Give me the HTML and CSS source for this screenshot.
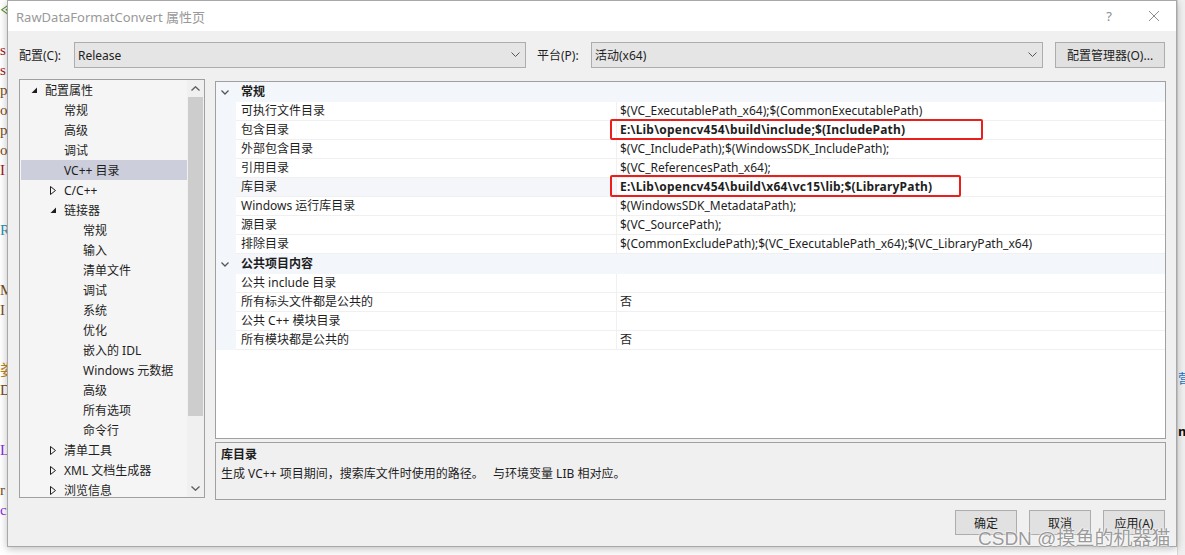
FILE: index.html
```html
<!DOCTYPE html>
<html lang="zh-CN">
<head>
<meta charset="utf-8">
<title>RawDataFormatConvert 属性页</title>
<link rel="stylesheet" href="styles.css">
</head>
<body>
<div class="screen">
  <div class="editor-strip">
    <pre class="code"><span class="c-g">≪</span>
<span class="c-r"> </span>
<span class="c-r">s</span>
<span class="c-r">s</span>
<span class="c-b">p</span>
<span class="c-b">o</span>
<span class="c-b">p</span>
<span class="c-b">o</span>
<span class="c-r">I</span>
<span> </span>
<span> </span>
<span class="c-t">R</span>
<span> </span>
<span> </span>
<span class="c-b">M</span>
<span class="c-b">I</span>
<span> </span>
<span> </span>
<span class="c-o">娄</span>
<span class="c-b">D</span>
<span> </span>
<span> </span>
<span class="c-p">L</span>
<span> </span>
<span class="c-b">r</span>
<span class="c-p">c</span></pre>
  </div>

  <div class="dialog">
    <div class="titlebar">
      <span class="title">RawDataFormatConvert 属性页</span>
      <span class="tb-help">?</span>
      <svg class="tb-close" width="12" height="12" viewBox="0 0 12 12"><path d="M1 1 L11 11 M11 1 L1 11" stroke="#8c8c8c" stroke-width="1" fill="none"/></svg>
    </div>

    <div class="body">
      <div class="config-row">
        <span class="lbl lbl1">配置(C):</span>
        <div class="combo">
          <span>Release</span>
          <svg class="chev" width="9" height="5" viewBox="0 0 9 5"><path d="M0.5 0.5 L4.5 4.5 L8.5 0.5" stroke="#555" stroke-width="1" fill="none"/></svg>
        </div>
        <span class="lbl lbl2">平台(P):</span>
        <div class="combo">
          <span>活动(x64)</span>
          <svg class="chev" width="9" height="5" viewBox="0 0 9 5"><path d="M0.5 0.5 L4.5 4.5 L8.5 0.5" stroke="#555" stroke-width="1" fill="none"/></svg>
        </div>
        <div class="btn cfgmgr">配置管理器(O)...</div>
      </div>

      <div class="main">
        <div class="tree">
          <div class="list">
            <div class="node l0"><span class="tw"><svg width="7" height="7" viewBox="0 0 7 7"><path d="M6 0.5 L6 6 L0.5 6 Z" fill="#1e1e1e"/></svg></span><span>配置属性</span></div>
            <div class="node l1"><span class="tw"></span><span>常规</span></div>
            <div class="node l1"><span class="tw"></span><span>高级</span></div>
            <div class="node l1"><span class="tw"></span><span>调试</span></div>
            <div class="node l1 sel"><span class="tw"></span><span>VC++ 目录</span></div>
            <div class="node l0b"><span class="tw"><svg width="6" height="9" viewBox="0 0 6 9"><path d="M0.5 0.5 L5.5 4.5 L0.5 8.5 Z" stroke="#1e1e1e" stroke-width="1" fill="none"/></svg></span><span>C/C++</span></div>
            <div class="node l0b"><span class="tw"><svg width="7" height="7" viewBox="0 0 7 7"><path d="M6 0.5 L6 6 L0.5 6 Z" fill="#1e1e1e"/></svg></span><span>链接器</span></div>
            <div class="node l2"><span class="tw"></span><span>常规</span></div>
            <div class="node l2"><span class="tw"></span><span>输入</span></div>
            <div class="node l2"><span class="tw"></span><span>清单文件</span></div>
            <div class="node l2"><span class="tw"></span><span>调试</span></div>
            <div class="node l2"><span class="tw"></span><span>系统</span></div>
            <div class="node l2"><span class="tw"></span><span>优化</span></div>
            <div class="node l2"><span class="tw"></span><span>嵌入的 IDL</span></div>
            <div class="node l2"><span class="tw"></span><span>Windows 元数据</span></div>
            <div class="node l2"><span class="tw"></span><span>高级</span></div>
            <div class="node l2"><span class="tw"></span><span>所有选项</span></div>
            <div class="node l2"><span class="tw"></span><span>命令行</span></div>
            <div class="node l0b"><span class="tw"><svg width="6" height="9" viewBox="0 0 6 9"><path d="M0.5 0.5 L5.5 4.5 L0.5 8.5 Z" stroke="#1e1e1e" stroke-width="1" fill="none"/></svg></span><span>清单工具</span></div>
            <div class="node l0b"><span class="tw"><svg width="6" height="9" viewBox="0 0 6 9"><path d="M0.5 0.5 L5.5 4.5 L0.5 8.5 Z" stroke="#1e1e1e" stroke-width="1" fill="none"/></svg></span><span>XML 文档生成器</span></div>
            <div class="node l0b"><span class="tw"><svg width="6" height="9" viewBox="0 0 6 9"><path d="M0.5 0.5 L5.5 4.5 L0.5 8.5 Z" stroke="#1e1e1e" stroke-width="1" fill="none"/></svg></span><span>浏览信息</span></div>
          </div>
          <div class="vscroll">
            <div class="sb-arrow"><svg width="9" height="5" viewBox="0 0 9 5"><path d="M0.5 4.5 L4.5 0.8 L8.5 4.5" stroke="#606060" stroke-width="1.4" fill="none"/></svg></div>
            <div class="sb-track"><div class="sb-thumb"></div></div>
            <div class="sb-arrow"><svg width="9" height="5" viewBox="0 0 9 5"><path d="M0.5 0.5 L4.5 4.2 L8.5 0.5" stroke="#606060" stroke-width="1.4" fill="none"/></svg></div>
          </div>
        </div>

        <div class="right">
          <div class="grid">
            <div class="cat first">
              <span class="gut"><svg width="8" height="5" viewBox="0 0 8 5"><path d="M0.5 0.5 L4 4 L7.5 0.5" stroke="#555" stroke-width="1.3" fill="none"/></svg></span>
              <span class="cat-name">常规</span>
            </div>
            <div class="row"><span class="gut"></span><span class="name">可执行文件目录</span><span class="val">$(VC_ExecutablePath_x64);$(CommonExecutablePath)</span></div>
            <div class="row"><span class="gut"></span><span class="name">包含目录</span><span class="val bold">E:\Lib\opencv454\build\include;$(IncludePath)<span class="mark mark1"></span></span></div>
            <div class="row"><span class="gut"></span><span class="name">外部包含目录</span><span class="val">$(VC_IncludePath);$(WindowsSDK_IncludePath);</span></div>
            <div class="row"><span class="gut"></span><span class="name">引用目录</span><span class="val">$(VC_ReferencesPath_x64);</span></div>
            <div class="row selrow"><span class="gut"></span><span class="name">库目录</span><span class="val bold">E:\Lib\opencv454\build\x64\vc15\lib;$(LibraryPath)<span class="mark mark2"></span></span></div>
            <div class="row"><span class="gut"></span><span class="name">Windows 运行库目录</span><span class="val">$(WindowsSDK_MetadataPath);</span></div>
            <div class="row"><span class="gut"></span><span class="name">源目录</span><span class="val">$(VC_SourcePath);</span></div>
            <div class="row"><span class="gut"></span><span class="name">排除目录</span><span class="val">$(CommonExcludePath);$(VC_ExecutablePath_x64);$(VC_LibraryPath_x64)</span></div>
            <div class="cat">
              <span class="gut"><svg width="8" height="5" viewBox="0 0 8 5"><path d="M0.5 0.5 L4 4 L7.5 0.5" stroke="#555" stroke-width="1.3" fill="none"/></svg></span>
              <span class="cat-name">公共项目内容</span>
            </div>
            <div class="row"><span class="gut"></span><span class="name">公共 include 目录</span><span class="val"></span></div>
            <div class="row"><span class="gut"></span><span class="name">所有标头文件都是公共的</span><span class="val">否</span></div>
            <div class="row"><span class="gut"></span><span class="name">公共 C++ 模块目录</span><span class="val"></span></div>
            <div class="row"><span class="gut"></span><span class="name">所有模块都是公共的</span><span class="val">否</span></div>
          </div>
          <div class="desc">
            <div class="desc-title">库目录</div>
            <div class="desc-text">生成 VC++ 项目期间，搜索库文件时使用的路径。   与环境变量 LIB 相对应。</div>
          </div>
        </div>
      </div>

      <div class="buttons">
        <div class="btn">确定</div>
        <div class="btn">取消</div>
        <div class="btn">应用(A)</div>
      </div>
    </div>
  </div>

  <div class="side-strip">
    <span class="side-a">营</span>
    <span class="side-b">m</span>
  </div>

  <div class="watermark">CSDN @摸鱼的机器猫</div>
</div>
</body>
</html>
```

FILE: styles.css
```css
* { box-sizing: border-box; }

html, body {
  margin: 0;
  padding: 0;
  background: #ffffff;
}

.screen {
  position: relative;
  width: 1185px;
  height: 555px;
  display: flex;
  overflow: hidden;
  font-family: "Noto Sans", "Noto Sans CJK SC", sans-serif;
  font-size: 12px;
  color: #1e1e1e;
}

/* code editor visible behind the dialog on the left */
.editor-strip {
  width: 7px;
  flex: none;
  overflow: hidden;
  background: #ffffff;
}
.code {
  margin: 0;
  padding-top: 0;
  font-family: "Liberation Serif", serif;
  font-size: 15px;
  line-height: 20px;
  white-space: pre;
  color: #333;
}
.c-g { color: #3c8a2e; }
.c-r { color: #a31515; }
.c-b { color: #7a4a18; }
.c-t { color: #2b91af; }
.c-o { color: #c08020; }
.c-p { color: #8a2be2; }

.side-strip {
  width: 8px;
  flex: none;
  background: #f0f0f0;
  border-left: 1px solid #d8d8d8;
  position: relative;
  overflow: hidden;
}
.side-a {
  position: absolute;
  top: 368px;
  left: 0;
  color: #1a73c8;
  font-size: 13px;
}
.side-b {
  position: absolute;
  top: 422px;
  left: 0;
  color: #111;
  font-weight: bold;
  font-size: 13px;
}

/* dialog */
.dialog {
  width: 1170px;
  height: 547px;
  flex: none;
  display: flex;
  flex-direction: column;
  background: #f0f0f0;
  border: 1px solid #a8a8a8;
  box-shadow: 0 2px 8px rgba(0,0,0,0.25);
  z-index: 1;
}

.titlebar {
  height: 30px;
  flex: none;
  background: #ffffff;
  display: flex;
  align-items: center;
  padding-left: 8px;
}
.title {
  color: #999999;
  font-size: 13px;
  flex: 1;
}
.tb-help {
  color: #8c8c8c;
  font-size: 13px;
  margin-right: 36px;
}
.tb-close {
  margin-right: 16px;
}

.body {
  flex: 1;
  display: flex;
  flex-direction: column;
  padding: 11px 11px 0 11px;
}

.config-row {
  display: flex;
  align-items: center;
  height: 26px;
}
.lbl { flex: none; white-space: nowrap; }
.lbl1 { width: 55px; }
.lbl2 { width: 65px; padding-left: 11px; }

.combo {
  width: 452px;
  height: 26px;
  flex: none;
  display: flex;
  align-items: center;
  justify-content: space-between;
  background: #e5e5e5;
  border: 1px solid #adadad;
  padding: 0 5px 0 3px;
}
.chev { margin-bottom: 1px; }

.btn {
  width: 62px;
  height: 25px;
  flex: none;
  display: flex;
  align-items: center;
  justify-content: center;
  background: #e1e1e1;
  border: 1px solid #adadad;
}
.cfgmgr {
  width: 110px;
  height: 26px;
  margin-left: 12px;
}

.main {
  display: flex;
  gap: 10px;
  margin-top: 11px;
  height: 421px;
}

/* left tree */
.tree {
  width: 186px;
  height: 419px;
  flex: none;
  display: flex;
  border: 1px solid #a0a0a0;
  background: #f5f5f5;
  overflow: hidden;
}
.list {
  flex: 1;
  padding: 0 0 0 1px;
  overflow: hidden;
}
.node {
  height: 20px;
  display: flex;
  align-items: center;
  white-space: nowrap;
}
.node .tw {
  width: 19px;
  height: 20px;
  flex: none;
  display: flex;
  align-items: center;
  padding-left: 5px;
}
.l0 { padding-left: 5px; }
.l0b { padding-left: 24px; }
.l1 { padding-left: 24px; }
.l2 { padding-left: 43px; }
.sel { background: #cccedb; }

.vscroll {
  width: 17px;
  flex: none;
  display: flex;
  flex-direction: column;
  background: #f0f0f0;
}
.sb-arrow {
  height: 17px;
  flex: none;
  display: flex;
  align-items: center;
  justify-content: center;
}
.sb-track {
  flex: 1;
  display: flex;
  flex-direction: column;
}
.sb-thumb {
  height: 319px;
  margin: 0 1px;
  background: #cdcdcd;
}

/* right: property grid + description */
.right {
  width: 951px;
  flex: none;
  display: flex;
  flex-direction: column;
  padding-top: 2px;
}
.grid {
  height: 358px;
  flex: none;
  border: 1px solid #a0a0a0;
  background: #ffffff;
  overflow: hidden;
}
.cat, .row {
  display: grid;
  grid-template-columns: 20px 380px 1fr;
}
.cat {
  height: 20px;
  background: #f3f6fb;
}
.cat .gut {
  display: flex;
  align-items: center;
  justify-content: center;
  padding-right: 2px;
}
.cat-name {
  grid-column: 2 / 4;
  font-weight: bold;
  padding-left: 5px;
  line-height: 19px;
}
.row { height: 19px; }
.gut { background: #f3f6fb; }
.name, .val {
  border-bottom: 1px solid #f0f0f0;
  line-height: 18px;
  white-space: nowrap;
}
.name { padding-left: 5px; }
.val {
  position: relative;
  border-left: 1px solid #f0f0f0;
  padding-left: 3px;
}
.bold { font-weight: bold; letter-spacing: 0.2px; }
.selrow .name { background: #f4f6f9; }

/* red annotation boxes drawn over the values */
.mark {
  position: absolute;
  border: 2px solid #ea1f1b;
  border-radius: 2px;
}
.mark1 { left: -7px; top: -2px; width: 373px; height: 21px; }
.mark2 { left: -7px; top: -3px; width: 351px; height: 22px; }

.desc {
  height: 58px;
  flex: none;
  margin-top: 3px;
  border: 1px solid #a0a0a0;
  background: #f0f0f0;
  padding: 2px 5px 0 5px;
}
.desc-title {
  font-weight: bold;
  line-height: 19px;
}
.desc-text { line-height: 19px; white-space: pre; }

.buttons {
  display: flex;
  justify-content: flex-end;
  gap: 12px;
  margin-top: 10px;
}

.watermark {
  position: absolute;
  left: 978px;
  top: 523px;
  font-size: 19px;
  color: rgba(128,128,128,0.8);
  text-shadow: 0 0 2px #fff, 0 0 2px #fff;
  white-space: nowrap;
  z-index: 5;
  font-family: "Liberation Sans", "Noto Sans CJK SC", sans-serif;
}
```
